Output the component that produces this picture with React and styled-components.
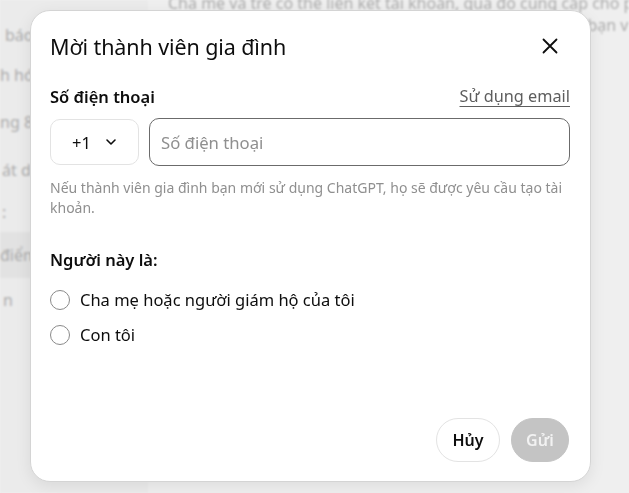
import React from "react";
import styled, { createGlobalStyle } from "styled-components";

const Global = createGlobalStyle`
  html, body { margin: 0; padding: 0; }
  body {
    font-family: "Noto Sans", "Open Sans", sans-serif;
    background: #efefef;
    width: 629px;
    height: 493px;
    overflow: hidden;
  }
  * { box-sizing: border-box; }
`;

const Page = styled.div`
  display: flex;
  width: 629px;
  height: 493px;
  filter: blur(1.2px);
  color: #acacac;
  font-size: 16px;
`;

const Sidebar = styled.div`
  width: 148px;
  background: #ebebeb;
  display: flex;
  flex-direction: column;
  padding-top: 15px;
`;

const SideItem = styled.div`
  height: ${(p) => p.$h}px;
  display: flex;
  align-items: center;
  padding-left: ${(p) => p.$x || 0}px;
  white-space: nowrap;
  overflow: hidden;
  background: ${(p) => (p.$active ? "#e2e2e2" : "transparent")};
`;

const Main = styled.div`
  flex: 1;
  background: #efefef;
  padding-left: 20px;
  white-space: nowrap;
  overflow: hidden;
  line-height: 22px;
  margin-top: -8px;
`;

const MainLine = styled.div`
  padding-left: ${(p) => p.$x || 0}px;
`;

const Overlay = styled.div`
  position: fixed;
  inset: 0;
  display: flex;
  align-items: flex-start;
  padding: 10px 0 0 30px;
`;

const Dialog = styled.div`
  width: 561px;
  height: 472px;
  background: #fff;
  border-radius: 20px;
  border: 1px solid #d4d4d4;
  box-shadow: 0 4px 16px rgba(0, 0, 0, 0.08);
  display: flex;
  flex-direction: column;
  padding: 19px 20px 19px 19px;
  color: #0d0d0d;
`;

const Header = styled.div`
  display: flex;
  align-items: center;
  justify-content: space-between;
  height: 32px;
  margin-bottom: 23px;
`;

const Title = styled.h2`
  margin: 0;
  font-size: 21.5px;
  font-weight: 400;
  letter-spacing: -0.1px;
`;

const CloseBtn = styled.button`
  border: none;
  background: none;
  padding: 0;
  width: 28px;
  height: 28px;
  display: flex;
  align-items: center;
  justify-content: center;
  margin-right: 6px;
  color: #0d0d0d;
`;

const LabelRow = styled.div`
  display: flex;
  justify-content: space-between;
  align-items: center;
  height: 22px;
  margin-bottom: 11px;
`;

const Label = styled.div`
  font-size: 16.5px;
  font-weight: 600;
`;

const LinkText = styled.a`
  font-size: 16.3px;
  color: #5d5d5d;
  text-decoration: underline;
  text-underline-offset: 4px;
  text-decoration-thickness: 1px;
`;

const InputRow = styled.div`
  display: flex;
  align-items: center;
  gap: 10px;
  height: 48px;
`;

const CountrySelect = styled.div`
  width: 89px;
  height: 46px;
  border: 1px solid #e3e3e3;
  border-radius: 10px;
  display: flex;
  align-items: center;
  justify-content: center;
  gap: 12px;
  font-size: 16.5px;
  padding-left: 2px;
`;

const PhoneInput = styled.input`
  flex: 1;
  height: 48px;
  border: 1.5px solid #6b6b6b;
  border-radius: 10px;
  font-family: inherit;
  font-size: 16.7px;
  padding: 0 11px;
  outline: none;
  color: #0d0d0d;
  &::placeholder { color: #8f8f8f; }
`;

const Help = styled.p`
  margin: 12px 0 0;
  font-size: 14px;
  line-height: 20px;
  color: #8f8f8f;
`;

const SectionLabel = styled(Label)`
  margin-top: 30px;
  margin-bottom: 11px;
`;

const RadioRow = styled.label`
  display: flex;
  align-items: center;
  gap: 10px;
  height: 35px;
  font-size: 16.5px;
`;

const RadioCircle = styled.span`
  width: 20px;
  height: 20px;
  border-radius: 50%;
  border: 1px solid #8a8a8a;
  flex-shrink: 0;
`;

const Footer = styled.div`
  margin-top: auto;
  display: flex;
  justify-content: flex-end;
  gap: 11px;
  padding-right: 1px;
`;

const Button = styled.button`
  height: 44px;
  width: ${(p) => (p.$primary ? 58 : 64)}px;
  padding: 0;
  border-radius: 999px;
  font-family: inherit;
  font-size: 16px;
  font-weight: 600;
  border: 1px solid ${(p) => (p.$primary ? "#c4c4c4" : "#e3e3e3")};
  background: ${(p) => (p.$primary ? "#c4c4c4" : "#fff")};
  color: ${(p) => (p.$primary ? "#f2f2f2" : "#0d0d0d")};
`;

const Chevron = () => (
  <svg width="16" height="16" viewBox="0 0 24 24" fill="none" stroke="#0d0d0d" strokeWidth="2.4" strokeLinecap="round" strokeLinejoin="round">
    <path d="M6 9l6 6 6-6" />
  </svg>
);

const XIcon = () => (
  <svg width="28" height="28" viewBox="0 0 28 28" fill="none" stroke="#0d0d0d" strokeWidth="1.8" strokeLinecap="round">
    <path d="M7.5 7.5l13 13M20.5 7.5l-13 13" />
  </svg>
);

export default function App() {
  return (
    <>
      <Global />
      <Page>
        <Sidebar>
          <SideItem $h={40} $x={5}>báo</SideItem>
          <SideItem $h={40} $x={0}>h hóa đơn</SideItem>
          <SideItem $h={54} $x={0}>ng 8 giờ</SideItem>
          <SideItem $h={42} $x={2}>át dữ liệu</SideItem>
          <SideItem $h={41} $x={2}>:</SideItem>
          <SideItem $h={46} $x={0} $active>điểm</SideItem>
          <SideItem $h={44} $x={3}>n</SideItem>
        </Sidebar>
        <Main>
          <MainLine>Cha mẹ và trẻ có thể liên kết tài khoản, qua đó cung cấp cho phụ huynh</MainLine>
          <MainLine $x={325}>thông tin về bạn và con</MainLine>
        </Main>
      </Page>
      <Overlay>
        <Dialog>
          <Header>
            <Title>Mời thành viên gia đình</Title>
            <CloseBtn aria-label="Đóng">
              <XIcon />
            </CloseBtn>
          </Header>
          <LabelRow>
            <Label>Số điện thoại</Label>
            <LinkText>Sử dụng email</LinkText>
          </LabelRow>
          <InputRow>
            <CountrySelect>
              <span>+1</span>
              <Chevron />
            </CountrySelect>
            <PhoneInput placeholder="Số điện thoại" />
          </InputRow>
          <Help>
            Nếu thành viên gia đình bạn mới sử dụng ChatGPT, họ sẽ được yêu cầu tạo tài khoản.
          </Help>
          <SectionLabel>Người này là:</SectionLabel>
          <RadioRow>
            <RadioCircle />
            Cha mẹ hoặc người giám hộ của tôi
          </RadioRow>
          <RadioRow>
            <RadioCircle />
            Con tôi
          </RadioRow>
          <Footer>
            <Button>Hủy</Button>
            <Button $primary>Gửi</Button>
          </Footer>
        </Dialog>
      </Overlay>
    </>
  );
}
